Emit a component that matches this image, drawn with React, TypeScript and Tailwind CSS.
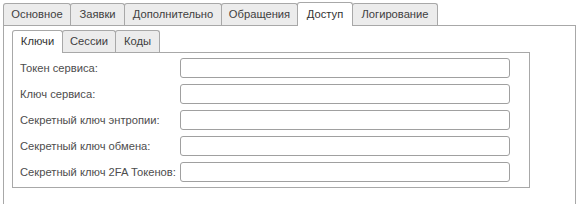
import React from "react";

const outerTabs = ["Основное", "Заявки", "Дополнительно", "Обращения", "Доступ", "Логирование"];
const outerW = [68, 55, 98, 77, 56, 86];
const innerTabs = ["Ключи", "Сессии", "Коды"];
const innerW = [51, 54, 45];
const fields = [
  "Токен сервиса:",
  "Ключ сервиса:",
  "Секретный ключ энтропии:",
  "Секретный ключ обмена:",
  "Секретный ключ 2FA Токенов:",
];

export default function App() {
  return (
    <div
      className="w-[581px] h-[204px] bg-white overflow-hidden text-[11.2px] text-[#4d4d4d]"
      style={{ fontFamily: '"Liberation Sans", Arial, sans-serif' }}
    >
      <div className="flex pl-[3px] h-[25px] items-end">
        {outerTabs.map((t, i) => {
          const active = i === 4;
          return (
            <div
              key={t}
              style={{ width: outerW[i] }}
              className={
                active
                  ? "relative z-10 h-[24px] -mb-px -mr-px flex items-center justify-center pb-px border border-b-0 border-[#a8a8a8] rounded-t-[3px] bg-white text-[#333]"
                  : "h-[22px] -mr-px flex items-center justify-center border border-b-0 border-[#a8a8a8] rounded-t-[3px] bg-[#ececec] text-[#404040]"
              }
            >
              {t}
            </div>
          );
        })}
      </div>
      <div className="ml-[3px] w-[573px] h-[179px] border border-b-0 border-[#a8a8a8] pl-[8px] pt-[4px]">
        <div className="flex h-[22px] items-end">
          {innerTabs.map((t, i) => {
            const active = i === 0;
            return (
              <div
                key={t}
                style={{ width: innerW[i] }}
                className={
                  active
                    ? "relative z-10 h-[23px] -mb-px -mr-px flex items-center justify-center pb-px border border-b-0 border-[#a8a8a8] rounded-t-[3px] bg-white text-[#333]"
                    : "h-[22px] -mr-px flex items-center justify-center border border-b-0 border-[#a8a8a8] rounded-t-[3px] bg-[#ececec] text-[#404040]"
                }
              >
                {t}
              </div>
            );
          })}
        </div>
        <div className="w-[518px] h-[136px] border border-[#a8a8a8] pl-[7px] pt-[5px] flex flex-col gap-[6px]">
          {fields.map((f) => (
            <div key={f} className="flex items-center h-[20px]">
              <div className="w-[160px] whitespace-nowrap">{f}</div>
              <div className="w-[330px] h-[20px] border border-[#a0a0a0] rounded-[3px] bg-white" />
            </div>
          ))}
        </div>
      </div>
    </div>
  );
}
